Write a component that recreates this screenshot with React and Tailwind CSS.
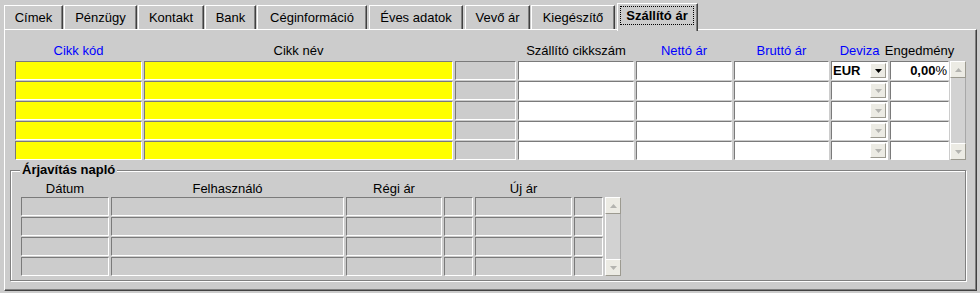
import React from "react";

const FONT = "font-['Liberation_Sans',Arial,sans-serif]";
const CELL =
  "h-[19px] border border-t-[#7a7a7a] border-l-[#7a7a7a] border-b-white border-r-white";

const tabs = [
  { t: "Címek", c: "w-[59px] ml-[4px]" },
  { t: "Pénzügy", c: "w-[73px] ml-px" },
  { t: "Kontakt", c: "w-[66px] ml-px" },
  { t: "Bank", c: "w-[51px] ml-px" },
  { t: "Céginformáció", c: "w-[110px] ml-px" },
  { t: "Éves adatok", c: "w-[94px] ml-[2px]" },
  { t: "Vevő ár", c: "w-[65px] ml-[2px]" },
  { t: "Kiegészítő", c: "w-[84px] ml-px" },
  { t: "Szállító ár", c: "w-[81px] ml-[2px]", sel: true },
];

const topCols = [
  { w: "w-[127px]", label: "Cikk kód", blue: true, bg: "bg-[#ffff00]" },
  { w: "w-[309px]", label: "Cikk név", bg: "bg-[#ffff00]" },
  { w: "w-[61px]", label: "", bg: "bg-[#cccccc]" },
  { w: "w-[116px]", label: "Szállító cikkszám", bg: "bg-white" },
  { w: "w-[96px]", label: "Nettó ár", blue: true, bg: "bg-white" },
  { w: "w-[95px]", label: "Bruttó ár", blue: true, bg: "bg-white" },
  { w: "w-[57px]", label: "Deviza", blue: true, bg: "bg-white", type: "dev" },
  { w: "w-[59px]", label: "Engedmény", bg: "bg-white", type: "eng" },
];

const botCols = [
  { w: "w-[88px]", label: "Dátum" },
  { w: "w-[233px]", label: "Felhasználó" },
  { w: "w-[96px]", label: "Régi ár" },
  { w: "w-[29px]", label: "" },
  { w: "w-[97px]", label: "Új ár" },
  { w: "w-[29px]", label: "" },
];

function Arrow({ up, color }) {
  return (
    <svg width="7" height="4" viewBox="0 0 7 4">
      {up ? (
        <polygon points="3.5,0 7,4 0,4" fill={color} />
      ) : (
        <polygon points="0,0 7,0 3.5,4" fill={color} />
      )}
    </svg>
  );
}

function SmallBtn({ up, dark, h }) {
  return (
    <div
      className={`${h} w-[16px] shrink-0 bg-[#ecebe4] border border-t-white border-l-white border-b-[#9c9a90] border-r-[#9c9a90] flex items-center justify-center`}
    >
      <Arrow up={up} color={dark ? "#000000" : "#b4b4b0"} />
    </div>
  );
}

function ScrollBar({ h }) {
  return (
    <div className={`flex flex-col w-[16px] ${h}`}>
      <SmallBtn up h="h-[17px]" />
      <div className="flex-1 bg-[#d2d2d2] border-l border-l-white border-r border-r-[#a8a8a8]" />
      <SmallBtn h="h-[17px]" />
    </div>
  );
}

export default function App() {
  return (
    <div className={`w-[980px] h-[293px] bg-[#cccccc] text-[13px] text-black ${FONT} overflow-hidden`}>
      {/* tab strip */}
      <div className="flex items-start pt-[3px]">
        {tabs.map((tab) =>
          tab.sel ? (
            <div
              key={tab.t}
              className={`${tab.c} relative z-10 h-[28px] -mb-[2px] bg-[#cccccc] border-t border-l border-white border-r border-r-[#404040] shadow-[inset_-1px_0_0_#808080] flex pb-[4px]`}
            >
              <div className="flex-1 m-[2px] mr-[3px] border border-dotted border-black flex items-center justify-center font-bold leading-none">
                {tab.t}
              </div>
            </div>
          ) : (
            <div
              key={tab.t}
              className={`${tab.c} mt-[2px] h-[24px] border-t border-l border-white border-r border-r-[#404040] shadow-[inset_-1px_0_0_#808080] flex items-center justify-center whitespace-nowrap`}
            >
              {tab.t}
            </div>
          )
        )}
      </div>

      {/* panel */}
      <div className="ml-[4px] w-[973px] h-[262px] border-t border-l border-white border-r border-b border-r-[#404040] border-b-[#404040] shadow-[inset_-1px_-1px_0_#808080] flex flex-col">
        {/* top grid */}
        <div className="ml-[10px] pt-[13px]">
          <div className="flex gap-[2px] h-[16px] leading-[16px] mb-[2px]">
            {topCols.map((c, i) => (
              <div
                key={i}
                className={`${c.w} flex justify-center whitespace-nowrap ${c.blue ? "text-[#0000ff]" : ""}`}
              >
                {c.label}
              </div>
            ))}
          </div>
          <div className="flex">
            <div className="flex flex-col gap-px">
              {[0, 1, 2, 3, 4].map((r) => (
                <div key={r} className="flex gap-[2px]">
                  {topCols.map((c, i) => (
                    <div key={i} className={`${CELL} ${c.w} ${c.bg} flex items-center`}>
                      {c.type === "dev" && (
                        <div className="flex-1 flex items-center justify-between pl-px pr-px">
                          <span className="font-bold leading-none">{r === 0 ? "EUR" : ""}</span>
                          <SmallBtn h="h-[15px]" dark={r === 0} />
                        </div>
                      )}
                      {c.type === "eng" && r === 0 && (
                        <div className="flex-1 text-right pr-[1px] leading-none">
                          <span className="font-bold">0,00</span>%
                        </div>
                      )}
                    </div>
                  ))}
                </div>
              ))}
            </div>
            <div className="ml-px">
              <ScrollBar h="h-[99px]" />
            </div>
          </div>
        </div>

        {/* group box */}
        <div className="ml-[5px] mt-[10px] w-[956px] h-[111px] relative border border-[#808080] shadow-[inset_1px_1px_0_#ffffff,1px_1px_0_#ffffff] pl-[10px] pt-[10px]">
          <div className="absolute left-[9px] -top-[9px] px-[2px] bg-[#cccccc] font-bold leading-[16px]">
            Árjavítás napló
          </div>
          <div className="flex gap-[2px] h-[16px] leading-[16px]">
            {botCols.map((c, i) => (
              <div key={i} className={`${c.w} flex justify-center whitespace-nowrap`}>
                {c.label}
              </div>
            ))}
          </div>
          <div className="flex">
            <div className="flex flex-col gap-px">
              {[0, 1, 2, 3].map((r) => (
                <div key={r} className="flex gap-[2px]">
                  {botCols.map((c, i) => (
                    <div key={i} className={`${CELL} ${c.w} bg-[#cccccc]`} />
                  ))}
                </div>
              ))}
            </div>
            <div className="ml-[2px]">
              <ScrollBar h="h-[79px]" />
            </div>
          </div>
        </div>
      </div>
    </div>
  );
}
